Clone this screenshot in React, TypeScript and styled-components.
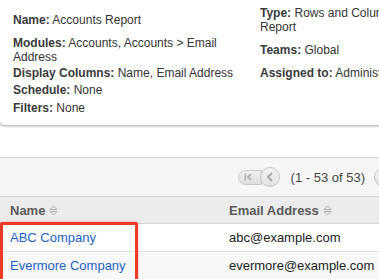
import React from 'react';
import styled, { createGlobalStyle } from 'styled-components';

const GlobalStyle = createGlobalStyle`
    html, body {
        margin: 0;
        padding: 0;
        overflow: hidden;
        background: #ffffff;
    }
    body {
        font-family: 'Liberation Sans', Arial, Helvetica, sans-serif;
        color: #333;
    }
`;

const Page = styled.div`
    width: 440px;
`;

// 리포트 요약 카드
const Card = styled.div`
    margin: -10px 0 31px -1px;
    padding: 14px 0 8px 13px;
    background: #ffffff;
    border: 1px solid #c4c4c4;
    border-radius: 6px;
    box-shadow: 0 1px 2px rgba(0, 0, 0, 0.18);
`;

const Details = styled.div`
    display: grid;
    grid-template-columns: 247px 165px;
    align-items: center;
`;

const Field = styled.div<{ $tall?: boolean }>`
    font-size: 12px;
    line-height: 14px;
    padding: ${(p) => (p.$tall ? '2px 0' : '1px 0')};
    color: #333;
`;

const Label = styled.b`
    font-weight: 700;
    color: #3a3a3a;
`;

const Toolbar = styled.div`
    display: flex;
    justify-content: flex-end;
    align-items: center;
    height: 38px;
    padding-right: 24px;
    background: #f6f6f6;
    border-top: 1px solid #cfcfcf;
`;

const Pager = styled.div`
    display: flex;
    align-items: center;
`;

const PillButton = styled.div<{ $side: 'left' | 'right' }>`
    width: 24px;
    height: 15px;
    box-sizing: border-box;
    display: flex;
    align-items: center;
    justify-content: ${(p) => (p.$side === 'left' ? 'flex-start' : 'flex-end')};
    padding: 0 5px;
    background: linear-gradient(#f1f1f1, #dedede);
    border: 1px solid #c9c9c9;
    border-radius: ${(p) => (p.$side === 'left' ? '8px 0 0 8px' : '0 8px 8px 0')};
`;

const RoundButton = styled.div<{ $overlap: 'left' | 'right' }>`
    width: 20px;
    height: 20px;
    box-sizing: border-box;
    display: flex;
    align-items: center;
    justify-content: center;
    background: linear-gradient(#f4f4f4, #e2e2e2);
    border: 1px solid #c6c6c6;
    border-radius: 50%;
    margin-left: ${(p) => (p.$overlap === 'left' ? '-2px' : '0')};
    margin-right: ${(p) => (p.$overlap === 'right' ? '-2px' : '0')};
    position: relative;
`;

const PageInfo = styled.span`
    font-size: 13px;
    color: #444;
    margin: 0 9px 0 11px;
`;

const TableWrap = styled.div`
    position: relative;
`;

const Table = styled.table`
    width: 100%;
    border-collapse: collapse;
    table-layout: fixed;
`;

const HeadCell = styled.th<{ $width?: number }>`
    width: ${(p) => (p.$width ? `${p.$width}px` : 'auto')};
    height: 26px;
    padding: 0 10px;
    text-align: left;
    font-size: 13px;
    font-weight: 700;
    color: #5a5a5a;
    background: #ececec;
    border-top: 1px solid #d4d4d4;
    border-bottom: 1px solid #d4d4d4;
    white-space: nowrap;
`;

const SortIcon = styled.svg`
    margin-left: 4px;
    vertical-align: -1px;
`;

const Row = styled.tr<{ $odd?: boolean }>`
    background: ${(p) => (p.$odd ? '#f8f8f8' : '#ffffff')};
`;

const Cell = styled.td`
    height: 27px;
    padding: 0 10px;
    font-size: 13px;
    color: #222;
    border-bottom: 1px solid #e2e2e2;
    white-space: nowrap;
`;

const RecordLink = styled.a`
    color: #1d61c4;
    text-decoration: none;
`;

// 강조 표시 (빨간 박스)
const Highlight = styled.div`
    position: absolute;
    left: 0;
    top: 26px;
    width: 138px;
    height: 76px;
    box-sizing: border-box;
    border: 3px solid #ee3b25;
    border-radius: 2px;
    box-shadow: 0 0 2px rgba(238, 59, 37, 0.55);
    pointer-events: none;
`;

const Sort = () => (
    <SortIcon width="9" height="11" viewBox="0 0 9 11">
        <path d="M1 4.5 L4.5 1 L8 4.5 Z" fill="none" stroke="#b0b0b0" strokeWidth="1" />
        <path d="M1 6.5 L4.5 10 L8 6.5 Z" fill="none" stroke="#b0b0b0" strokeWidth="1" />
    </SortIcon>
);

const Chevron = ({ dir, color }: { dir: 'left' | 'right'; color: string }) => (
    <svg width="8" height="10" viewBox="0 0 8 10">
        <path
            d={dir === 'left' ? 'M5.5 1.5 L2 5 L5.5 8.5' : 'M2.5 1.5 L6 5 L2.5 8.5'}
            fill="none"
            stroke={color}
            strokeWidth="2"
            strokeLinecap="round"
            strokeLinejoin="round"
        />
    </svg>
);

const EdgeIcon = ({ dir }: { dir: 'left' | 'right' }) => (
    <svg width="9" height="8" viewBox="0 0 9 8">
        {dir === 'left' ? (
            <>
                <rect x="0.5" y="0.5" width="1.6" height="7" fill="#b4b4b4" />
                <path d="M7 1 L4 4 L7 7" fill="none" stroke="#b4b4b4" strokeWidth="1.8" />
            </>
        ) : (
            <>
                <rect x="6.9" y="0.5" width="1.6" height="7" fill="#b4b4b4" />
                <path d="M2 1 L5 4 L2 7" fill="none" stroke="#b4b4b4" strokeWidth="1.8" />
            </>
        )}
    </svg>
);

const details = [
    { left: ['Name:', 'Accounts Report'], right: ['Type:', 'Rows and Columns Report'] },
    { left: ['Modules:', 'Accounts, Accounts > Email Address'], right: ['Teams:', 'Global'] },
    { left: ['Display Columns:', 'Name, Email Address'], right: ['Assigned to:', 'Administrator'] },
    { left: ['Schedule:', 'None'], tall: true },
    { left: ['Filters:', 'None'], tall: true },
];

const records = [
    { name: 'ABC Company', email: 'abc@example.com' },
    { name: 'Evermore Company', email: 'evermore@example.com' },
];

const App = () => {
    return (
        <Page>
            <GlobalStyle />
            <Card>
                <Details>
                    {details.map((d, i) => (
                        <React.Fragment key={i}>
                            <Field $tall={d.tall}>
                                <Label>{d.left[0]}</Label> {d.left[1]}
                            </Field>
                            <Field $tall={d.tall}>
                                {d.right && (
                                    <>
                                        <Label>{d.right[0]}</Label> {d.right[1]}
                                    </>
                                )}
                            </Field>
                        </React.Fragment>
                    ))}
                </Details>
            </Card>

            <Toolbar>
                <Pager>
                    <PillButton $side="left">
                        <EdgeIcon dir="left" />
                    </PillButton>
                    <RoundButton $overlap="left">
                        <Chevron dir="left" color="#a8a8a8" />
                    </RoundButton>
                    <PageInfo>(1 - 53 of 53)</PageInfo>
                    <RoundButton $overlap="right">
                        <Chevron dir="right" color="#a8a8a8" />
                    </RoundButton>
                    <PillButton $side="right">
                        <EdgeIcon dir="right" />
                    </PillButton>
                </Pager>
            </Toolbar>

            <TableWrap>
                <Table>
                    <thead>
                        <tr>
                            <HeadCell $width={199}>
                                Name
                                <Sort />
                            </HeadCell>
                            <HeadCell>
                                Email Address
                                <Sort />
                            </HeadCell>
                        </tr>
                    </thead>
                    <tbody>
                        {records.map((r, i) => (
                            <Row key={r.email} $odd={i % 2 === 1}>
                                <Cell>
                                    <RecordLink href="#">{r.name}</RecordLink>
                                </Cell>
                                <Cell>{r.email}</Cell>
                            </Row>
                        ))}
                    </tbody>
                </Table>
                <Highlight />
            </TableWrap>
        </Page>
    );
};

export default App;
